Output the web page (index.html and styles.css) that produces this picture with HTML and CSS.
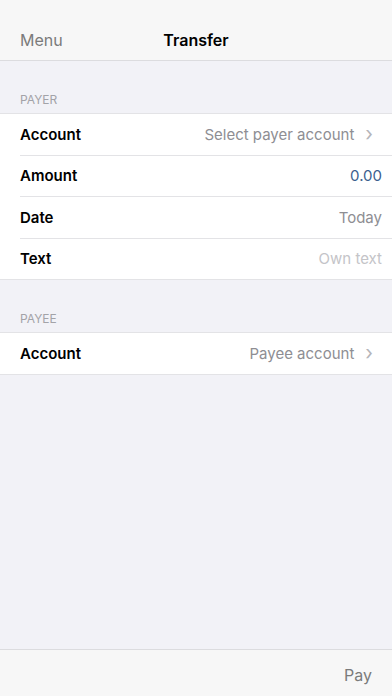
FILE: index.html
```html
<!DOCTYPE html>
<html lang="en">
<head>
    <meta charset="UTF-8">
    <meta name="viewport" content="width=device-width, initial-scale=1.0">
    <title>Transfer</title>
    <link rel="stylesheet" href="styles.css">
</head>
<body>
    <header class="navbar">
        <span class="nav-left">Menu</span>
        <h1 class="nav-title">Transfer</h1>
    </header>

    <main class="content">
        <div class="section-title">PAYER</div>
        <div class="group">
            <div class="row">
                <span class="row-label">Account</span>
                <span class="row-value">Select payer account <span class="chevron">&#x203A;</span></span>
            </div>
            <div class="row">
                <span class="row-label">Amount</span>
                <span class="row-value amount">0.00</span>
            </div>
            <div class="row">
                <span class="row-label">Date</span>
                <span class="row-value">Today</span>
            </div>
            <div class="row">
                <span class="row-label">Text</span>
                <span class="row-value placeholder">Own text</span>
            </div>
        </div>

        <div class="section-title">PAYEE</div>
        <div class="group">
            <div class="row">
                <span class="row-label">Account</span>
                <span class="row-value">Payee account <span class="chevron">&#x203A;</span></span>
            </div>
        </div>
    </main>

    <footer class="toolbar">
        <span class="pay">Pay</span>
    </footer>
</body>
</html>
```

FILE: styles.css
```css
body {
    margin: 0;
    height: 696px;
    display: flex;
    flex-direction: column;
    background-color: #f2f2f7;
    font-family: Inter, Roboto, "Liberation Sans", sans-serif;
    color: #000;
}

.navbar {
    height: 40px;
    padding-top: 20px;
    flex-shrink: 0;
    display: flex;
    align-items: center;
    position: relative;
    background-color: #f7f7f7;
    border-bottom: 1px solid #dcdcdf;
}

.nav-left {
    margin-left: 20px;
    font-size: 16px;
    color: #7b7b7b;
}

.nav-title {
    position: absolute;
    left: 0;
    right: 0;
    top: 20px;
    line-height: 40px;
    margin: 0;
    text-align: center;
    font-size: 16px;
    font-weight: 600;
    pointer-events: none;
}

.content {
    flex: 1;
}

.section-title {
    padding: 32px 20px 7px;
    font-size: 12px;
    color: #a3a3a8;
    line-height: 13px;
}

.group {
    background-color: #fff;
    border-top: 1px solid #e3e3e6;
    border-bottom: 1px solid #e3e3e6;
}

.row {
    height: 40.5px;
    display: flex;
    align-items: center;
    justify-content: space-between;
    padding-right: 10px;
    margin-left: 20px;
    font-size: 15px;
}

.row + .row {
    border-top: 1px solid #e3e3e6;
}

.row-label {
    font-weight: 600;
}

.row-value {
    color: #8e8e93;
    display: flex;
    align-items: center;
}

.row-value.amount {
    color: #3c5f8f;
}

.row-value.placeholder {
    color: #c4c4c8;
}

.chevron {
    margin-left: 11px;
    margin-right: 9px;
    font-size: 20px;
    line-height: 1;
    color: #b5b5ba;
}

.toolbar {
    height: 42px;
    padding-top: 4px;
    flex-shrink: 0;
    display: flex;
    align-items: center;
    justify-content: flex-end;
    background-color: #f7f7f7;
    border-top: 1px solid #dcdcdf;
}

.pay {
    margin-right: 20px;
    font-size: 16px;
    color: #7b7b7b;
}
```
